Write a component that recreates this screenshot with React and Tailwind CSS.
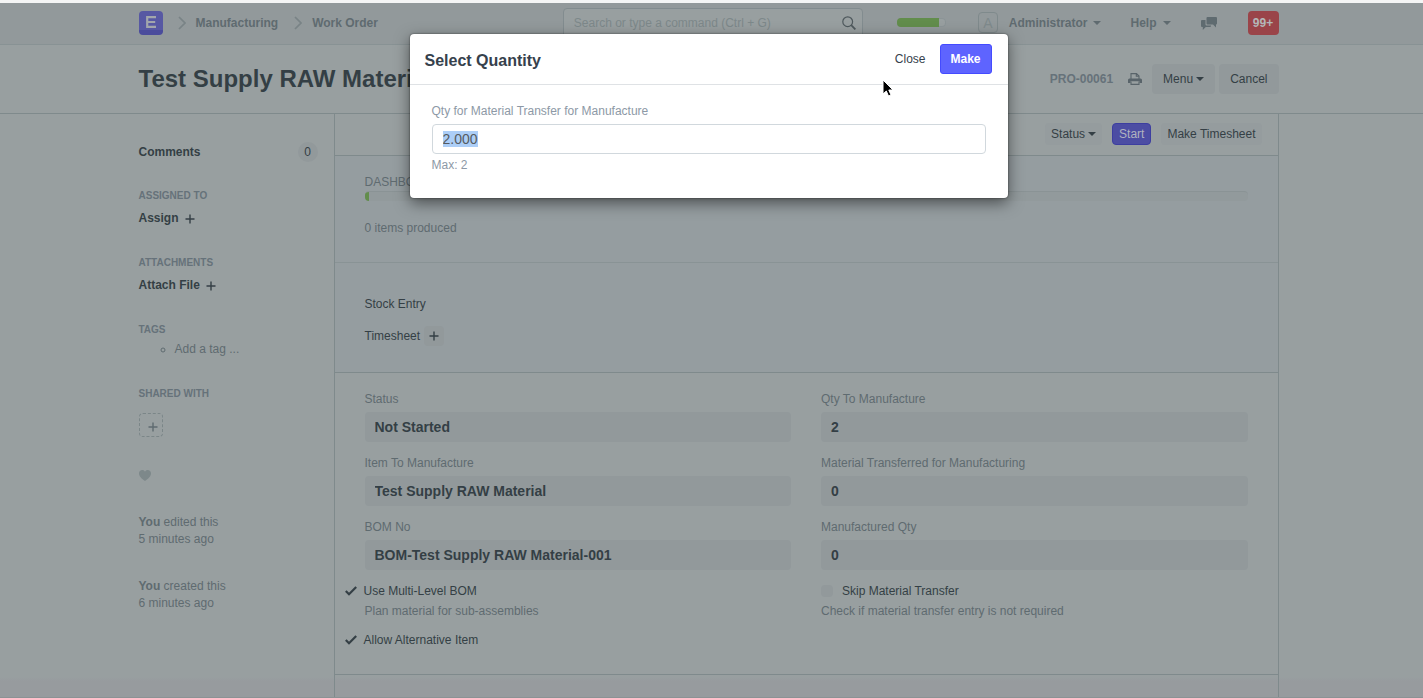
function Caret({ className = "" }) {
  return (
    <svg viewBox="0 0 8 4" className={`inline-block h-1 w-2 shrink-0 ${className}`} fill="currentColor" aria-hidden="true">
      <path d="M0 0h8L4 4z" />
    </svg>
  );
}

function Plus() {
  return (
    <svg viewBox="0 0 10 10" className="h-2.5 w-2.5 shrink-0" stroke="currentColor" strokeWidth="1.4" aria-hidden="true">
      <path d="M5 .5v9M.5 5h9" />
    </svg>
  );
}

function Chevron({ className = "" }) {
  return (
    <svg viewBox="0 0 8 14" className={`h-3.5 w-2 shrink-0 text-[#798386] ${className}`} fill="none" stroke="currentColor" strokeWidth="1.7" aria-hidden="true">
      <path d="M1 1l6 6-6 6" />
    </svg>
  );
}

function Check() {
  return (
    <svg viewBox="0 0 12 10" className="h-2.5 w-3 shrink-0" fill="none" stroke="currentColor" strokeWidth="2.2" aria-hidden="true">
      <path d="M.8 5l3.200 3.200L11.200 1" />
    </svg>
  );
}

function Navbar() {
  return (
    <header className="border-t-3 border-b border-t-[#f4f5f5] border-b-[#889294] bg-[#92999b] pr-1.5">
      <div className="mx-auto flex h-[41px] max-w-[1140px] items-center pb-0.5 text-xs font-bold text-[#5f6b70]">
        <a href="#home" aria-label="Home" className="flex h-6 w-6 items-center justify-center rounded border-b-5 border-[#4b4c9c] bg-[#5758a3]">
          <svg viewBox="0 0 10 12" className="mt-1 h-3 w-2.5" fill="none" stroke="#a2a6ac" strokeWidth="2.2" aria-hidden="true">
            <path d="M10 1.100H1.200v9.800H10M1 6h8.200" />
          </svg>
        </a>
        <nav className="ml-[15px] flex items-center" aria-label="Breadcrumb">
          <Chevron />
          <a href="#manufacturing" className="ml-2.5">Manufacturing</a>
          <Chevron className="ml-4" />
          <a href="#work-order" className="ml-2.5">Work Order</a>
        </nav>
        <div className="ml-auto flex items-center">
          <label className="flex h-[30px] w-[300px] items-center rounded border border-[#828c8f] bg-[#989fa0] px-2.5">
            <input type="text" aria-label="Search" placeholder="Search or type a command (Ctrl + G)" className="min-w-0 flex-1 bg-transparent text-xs font-normal outline-none placeholder:text-[#7d888a]" />
            <svg viewBox="0 0 14 14" className="-mr-1 h-3.5 w-3.5" fill="none" stroke="#4f595d" strokeWidth="1.2" aria-hidden="true">
              <circle cx="5.7" cy="5.7" r="4.9" />
              <path d="M9.2 9.2l4.2 4.2" strokeWidth="1.8" />
            </svg>
          </label>
          <div className="ml-[34px] h-[9px] w-[49px] overflow-hidden rounded bg-[#989fa0] ring-1 ring-[#8b9496] ring-inset">
            <div className="h-full w-[42px] bg-[#628d4c]" />
          </div>
          <span className="ml-8 flex h-[21px] w-5 items-center justify-center rounded border border-[#7f8a8c] text-sm font-normal text-[#7f8a8c]">A</span>
          <button type="button" className="ml-[11px] flex items-center gap-1.5">Administrator <Caret /></button>
          <button type="button" className="ml-[29px] flex items-center gap-1.5">Help <Caret /></button>
          <button type="button" aria-label="Chat" className="ml-[30px]">
            <svg viewBox="0 0 16 14" className="h-3.5 w-4" fill="currentColor" aria-hidden="true">
              <path d="M6.500 1h8.500a1 1 0 0 1 1 1v5.500a1 1 0 0 1-1 1v3l-3-3H6.500a1 1 0 0 1-1-1V2a1 1 0 0 1 1-1z" />
              <path d="M4.500 4H1a1 1 0 0 0-1 1v5a1 1 0 0 0 1 1h.800v3l3-3H9a1 1 0 0 0 1-1v-.500H5.500a1 1 0 0 1-1-1z" />
            </svg>
          </button>
          <button type="button" className="ml-[31px] flex h-6 w-[31px] items-center justify-center rounded bg-[#9a4449] text-xs text-[#b3b7b8]">99+</button>
        </div>
      </div>
    </header>
  );
}

function PageHead() {
  return (
    <div className="border-b border-[#7f8a8c] pr-1.5">
      <div className="mx-auto flex h-[68px] max-w-[1140px] items-center text-xs">
        <h1 className="text-2xl font-bold text-[#343f45]">Test Supply RAW Material</h1>
        <div className="ml-auto flex items-center">
          <span className="font-bold text-[#66727a]">PRO-00061</span>
          <button type="button" aria-label="Print" className="ml-[15px] text-[#59646a]">
            <svg viewBox="0 0 14 12" className="h-3 w-3.5" fill="none" stroke="currentColor" strokeWidth="1.1" aria-hidden="true">
              <path d="M3 6V.6h5.500L11 3V6M8.300.800V3.200H11M3 8.600v2.800h8V8.600" />
              <path d="M1.500 5.500h11A1.500 1.500 0 0 1 14 7v3h-2.500V8.200h-9V10H0V7a1.500 1.500 0 0 1 1.500-1.500z" fill="currentColor" stroke="none" />
            </svg>
          </button>
          <button type="button" className="ml-2.5 flex h-[30px] items-center gap-[3px] rounded bg-[#92999b] px-[11px] text-[#343f45]">Menu <Caret /></button>
          <button type="button" className="ml-1 flex h-[30px] items-center rounded bg-[#92999b] px-[11px] text-[#343f45]">Cancel</button>
        </div>
      </div>
    </div>
  );
}

function SideSection({ title, children }) {
  return (
    <section>
      <h2 className="text-[10px] leading-4 font-bold text-[#66727a] uppercase">{title}</h2>
      {children}
    </section>
  );
}

function Sidebar() {
  return (
    <aside className="w-[195px] shrink-0 text-xs leading-[17px] text-[#5f6b70]">
      <div className="mt-7 mr-4 flex h-5 items-center justify-between text-[#343f45]">
        <a href="#comments" className="font-bold">Comments</a>
        <span className="flex h-5 w-5 items-center justify-center rounded-full bg-[#92999b]">0</span>
      </div>
      <div className="mt-[26px] flex flex-col gap-7">
        <SideSection title="Assigned To">
          <button type="button" className="mt-1.5 flex items-center gap-1.5 font-bold text-[#343f45]">Assign <Plus /></button>
        </SideSection>
        <SideSection title="Attachments">
          <button type="button" className="mt-1.5 flex items-center gap-1.5 font-bold text-[#343f45]">Attach File <Plus /></button>
        </SideSection>
        <SideSection title="Tags">
          <ul className="mt-[3px] list-[circle] pl-9">
            <li>Add a tag ...</li>
          </ul>
        </SideSection>
        <SideSection title="Shared With">
          <button type="button" aria-label="Share" className="mt-[11px] flex h-6 w-6 items-center justify-center rounded border border-dashed border-[#7b8688] pt-1 pl-1"><Plus /></button>
        </SideSection>
      </div>
      <button type="button" aria-label="Like" className="mt-[33px] block text-[#7d888a]">
        <svg viewBox="0 0 12 11" className="h-[11px] w-3" fill="currentColor" aria-hidden="true">
          <path d="M6 11C3.500 9.300 0 6.500 0 3.500 0 1.500 1.400 0 3.300 0 4.500 0 5.500.700 6 1.700 6.500.700 7.500 0 8.700 0 10.600 0 12 1.500 12 3.500c0 3-3.500 5.800-6 7.500z" />
        </svg>
      </button>
      <p className="mt-[33px]"><b>You</b> edited this<br />5 minutes ago</p>
      <p className="mt-[30px]"><b>You</b> created this<br />6 minutes ago</p>
    </aside>
  );
}

function Field({ id, label, value }) {
  return (
    <div>
      <label htmlFor={id} className="block leading-4 text-[#5f6b70]">{label}</label>
      <input id={id} type="text" readOnly defaultValue={value} className="mt-[5px] block h-[30px] w-full rounded bg-[#92999b] px-2.5 text-sm font-bold text-[#343f45]" />
    </div>
  );
}

function CheckedField({ label }) {
  return (
    <label className="relative -ml-5 flex h-4 items-center gap-[7px] text-[#343f45]">
      <input type="checkbox" defaultChecked className="sr-only" />
      <Check />
      {label}
    </label>
  );
}

function Main() {
  return (
    <main className="min-w-0 flex-1 border-x border-[#7f8a8c] text-xs text-[#343f45]">
      <div className="flex h-[42px] items-center justify-end border-b border-[#7f8a8c] pr-4 pb-px">
        <button type="button" className="flex h-[22px] items-center gap-[3px] rounded bg-[#959c9e] px-1.5">Status <Caret /></button>
        <button type="button" className="ml-2.5 flex h-[22px] items-center rounded border border-[#3d3ea0] bg-[#4c4da3] px-1.5 text-[#b0b3bf]">Start</button>
        <button type="button" className="ml-2.5 flex h-[22px] items-center rounded bg-[#959c9e] px-1.5">Make Timesheet</button>
      </div>
      <section className="border-b border-[#899395] bg-[#959da0] px-[30px] pt-[18px] pb-6 text-[#5f6b70]">
        <h2 className="leading-4">DASHBOARD</h2>
        <div className="mt-px h-2.5 overflow-hidden rounded border-t border-[#8a9395] bg-[#929a9c]">
          <div className="h-full w-1 bg-[#628d4c]" />
        </div>
        <p className="mt-[17px] leading-5">0 items produced</p>
      </section>
      <section className="border-b border-[#7f8a8c] bg-[#959da0] px-[30px] pt-8 pb-[26px]">
        <a href="#stock-entry" className="block leading-[18px]">Stock Entry</a>
        <div className="mt-[13px] flex h-5 items-center gap-1">
          <a href="#timesheet">Timesheet</a>
          <button type="button" aria-label="Add timesheet" className="flex h-5 w-5 items-center justify-center rounded bg-[#92999b]"><Plus /></button>
        </div>
      </section>
      <section className="grid grid-cols-2 gap-x-[30px] border-b border-[#7f8a8c] px-[30px] pt-[18px] pb-[26px]">
        <div className="flex flex-col gap-[13px]">
          <Field id="status" label="Status" value="Not Started" />
          <Field id="item" label="Item To Manufacture" value="Test Supply RAW Material" />
          <Field id="bom" label="BOM No" value="BOM-Test Supply RAW Material-001" />
          <div>
            <CheckedField label="Use Multi-Level BOM" />
            <p className="mt-1 mb-[13px] leading-4 text-[#5f6b70]">Plan material for sub-assemblies</p>
            <CheckedField label="Allow Alternative Item" />
          </div>
        </div>
        <div className="flex flex-col gap-[13px]">
          <Field id="qty" label="Qty To Manufacture" value="2" />
          <Field id="transferred" label="Material Transferred for Manufacturing" value="0" />
          <Field id="manufactured" label="Manufactured Qty" value="0" />
          <div>
            <label className="flex h-4 items-center gap-[9px]">
              <input type="checkbox" className="h-3 w-3 appearance-none rounded bg-[#92999b]" />
              Skip Material Transfer
            </label>
            <p className="mt-1 leading-4 text-[#5f6b70]">Check if material transfer entry is not required</p>
          </div>
        </div>
      </section>
    </main>
  );
}

function QuantityDialog() {
  return (
    <div className="absolute inset-x-0 top-[34px] flex justify-center pr-1.5">
      <div role="dialog" aria-labelledby="dialog-title" className="w-[598px] rounded bg-white pb-[25px] text-xs shadow-[0_5px_15px_rgba(0,0,0,0.5),0_0_2px_rgba(0,0,0,0.6)]">
        <div className="flex h-[51px] items-center border-b border-[#dfe2e5] pr-4 pl-[15px]">
          <h2 id="dialog-title" className="pt-1 text-base font-bold text-[#36414c]">Select Quantity</h2>
          <button type="button" className="ml-auto px-3.5 text-[#36414c]">Close</button>
          <button type="button" className="h-[30px] w-[52px] rounded-[3px] border border-[#444bff] bg-[#5e64ff] font-bold text-white">Make</button>
        </div>
        <div className="px-[22px] pt-[18px] leading-4 text-[#8d99a6]">
          <label htmlFor="transfer-qty" className="block">Qty for Material Transfer for Manufacture</label>
          <input id="transfer-qty" type="text" defaultValue="2.000" autoFocus onFocus={(e) => e.target.select()} className="mt-[5px] block h-[30px] w-full rounded border border-[#d1d8dd] px-2.5 text-sm text-[#555b61] outline-none selection:bg-[#accef7] selection:text-[#555b61]" />
          <p className="mt-[3px]">Max: 2</p>
        </div>
      </div>
    </div>
  );
}

function Pointer() {
  return (
    <svg viewBox="0 0 12 18" className="pointer-events-none absolute top-[79px] left-[882px] h-[18px] w-3" aria-hidden="true">
      <path d="M1 1v14l3.300-3 2.200 5 2.500-1-2.200-5H11z" fill="#000" stroke="#fff" strokeWidth="1" />
    </svg>
  );
}

export default function App() {
  return (
    <div className="relative flex min-h-screen flex-col border-b border-[#8b9294] bg-[linear-gradient(to_top,#979b9e_16px,#989fa0_20px)] font-['Liberation_Sans',Arial,sans-serif]">
      <Navbar />
      <PageHead />
      <div className="flex flex-1 flex-col pr-1.5">
        <div className="mx-auto flex w-full max-w-[1140px] flex-1">
          <Sidebar />
          <Main />
        </div>
      </div>
      <QuantityDialog />
      <Pointer />
    </div>
  );
}
